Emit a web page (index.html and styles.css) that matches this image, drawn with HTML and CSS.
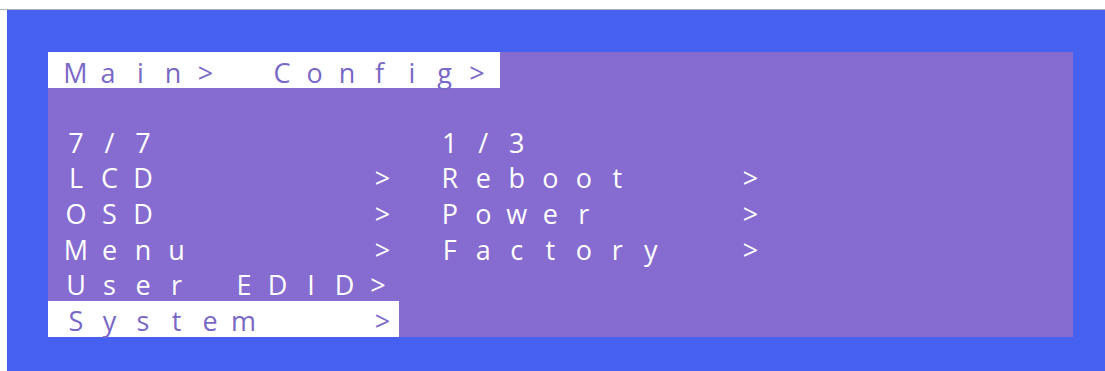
FILE: index.html
```html
<!DOCTYPE html>
<html>
<head>
<meta charset="utf-8">
<link rel="stylesheet" href="styles.css">
</head>
<body>
<div class="doc-strip"></div>
<div class="screen">
  <div class="panel">
    <div class="row header">
      <span class="crumb"><span class="ch">M</span><span class="ch">a</span><span class="ch">i</span><span class="ch">n</span><span class="ch">&gt;</span><span class="sp"> </span><span class="ch">C</span><span class="ch">o</span><span class="ch">n</span><span class="ch">f</span><span class="ch">i</span><span class="ch">g</span><span class="ch">&gt;</span></span>
    </div>
    <div class="row blank"></div>
    <div class="cols">
      <div class="list left">
        <div class="row"><span class="label"><span class="ch">7</span><span class="ch">/</span><span class="ch">7</span></span></div>
        <div class="row"><span class="label"><span class="ch">L</span><span class="ch">C</span><span class="ch">D</span></span><span class="ch">&gt;</span></div>
        <div class="row"><span class="label"><span class="ch">O</span><span class="ch">S</span><span class="ch">D</span></span><span class="ch">&gt;</span></div>
        <div class="row"><span class="label"><span class="ch">M</span><span class="ch">e</span><span class="ch">n</span><span class="ch">u</span></span><span class="ch">&gt;</span></div>
        <div class="row"><span class="label free"><span class="ch">U</span><span class="ch">s</span><span class="ch">e</span><span class="ch">r</span><span class="sp"> </span><span class="ch">E</span><span class="ch">D</span><span class="ch">I</span><span class="ch">D</span><span class="ch">&gt;</span></span></div>
        <div class="row selected"><span class="label"><span class="ch">S</span><span class="ch">y</span><span class="ch">s</span><span class="ch">t</span><span class="ch">e</span><span class="ch">m</span></span><span class="ch">&gt;</span></div>
      </div>
      <div class="list right">
        <div class="row"><span class="label"><span class="ch">1</span><span class="ch">/</span><span class="ch">3</span></span></div>
        <div class="row"><span class="label"><span class="ch">R</span><span class="ch">e</span><span class="ch">b</span><span class="ch">o</span><span class="ch">o</span><span class="ch">t</span></span><span class="ch">&gt;</span></div>
        <div class="row"><span class="label"><span class="ch">P</span><span class="ch">o</span><span class="ch">w</span><span class="ch">e</span><span class="ch">r</span></span><span class="ch">&gt;</span></div>
        <div class="row"><span class="label"><span class="ch">F</span><span class="ch">a</span><span class="ch">c</span><span class="ch">t</span><span class="ch">o</span><span class="ch">r</span><span class="ch">y</span></span><span class="ch">&gt;</span></div>
      </div>
    </div>
  </div>
</div>
</body>
</html>
```

FILE: styles.css
```css
html, body {
  margin: 0;
  padding: 0;
  background: #ffffff;
}

.doc-strip {
  height: 9px;
  border-bottom: 1px solid #aab0c8;
  background: #ffffff;
}

.screen {
  margin-left: 7px;
  height: 361px;
  background: #4660f0;
  padding: 42px 32px 0 41px;
  box-sizing: border-box;
}

.panel {
  background: #866cd0;
  height: 285px;
  font-family: "Open Sans", "Noto Sans", sans-serif;
  font-size: 27px;
  color: #ffffff;
}

.row {
  height: 35.625px;
  line-height: 35.625px;
  display: flex;
  align-items: center;
}

.ch {
  display: inline-block;
  width: 33.5px;
  text-align: center;
  padding-top: 3px;
}

.sp {
  display: inline-block;
  width: 34px;
  white-space: pre;
}

.header .crumb {
  display: flex;
  background: #ffffff;
  color: #7a68c6;
  width: 440.75px;
  height: 100%;
  padding-left: 11.25px;
}

.header .ch {
  width: 32.5px;
}

.header .sp {
  width: 44px;
}

.cols {
  display: flex;
}

.list.left {
  width: 351px;
}

.list .row {
  padding-left: 11.25px;
}

.list.right .row {
  padding-left: 34px;
}

.label {
  display: flex;
  width: 312.5px;
}

.list.right .label {
  width: 300.75px;
}

.label.free {
  width: auto;
}

.row.selected {
  background: #ffffff;
  color: #7a68c6;
}
```
